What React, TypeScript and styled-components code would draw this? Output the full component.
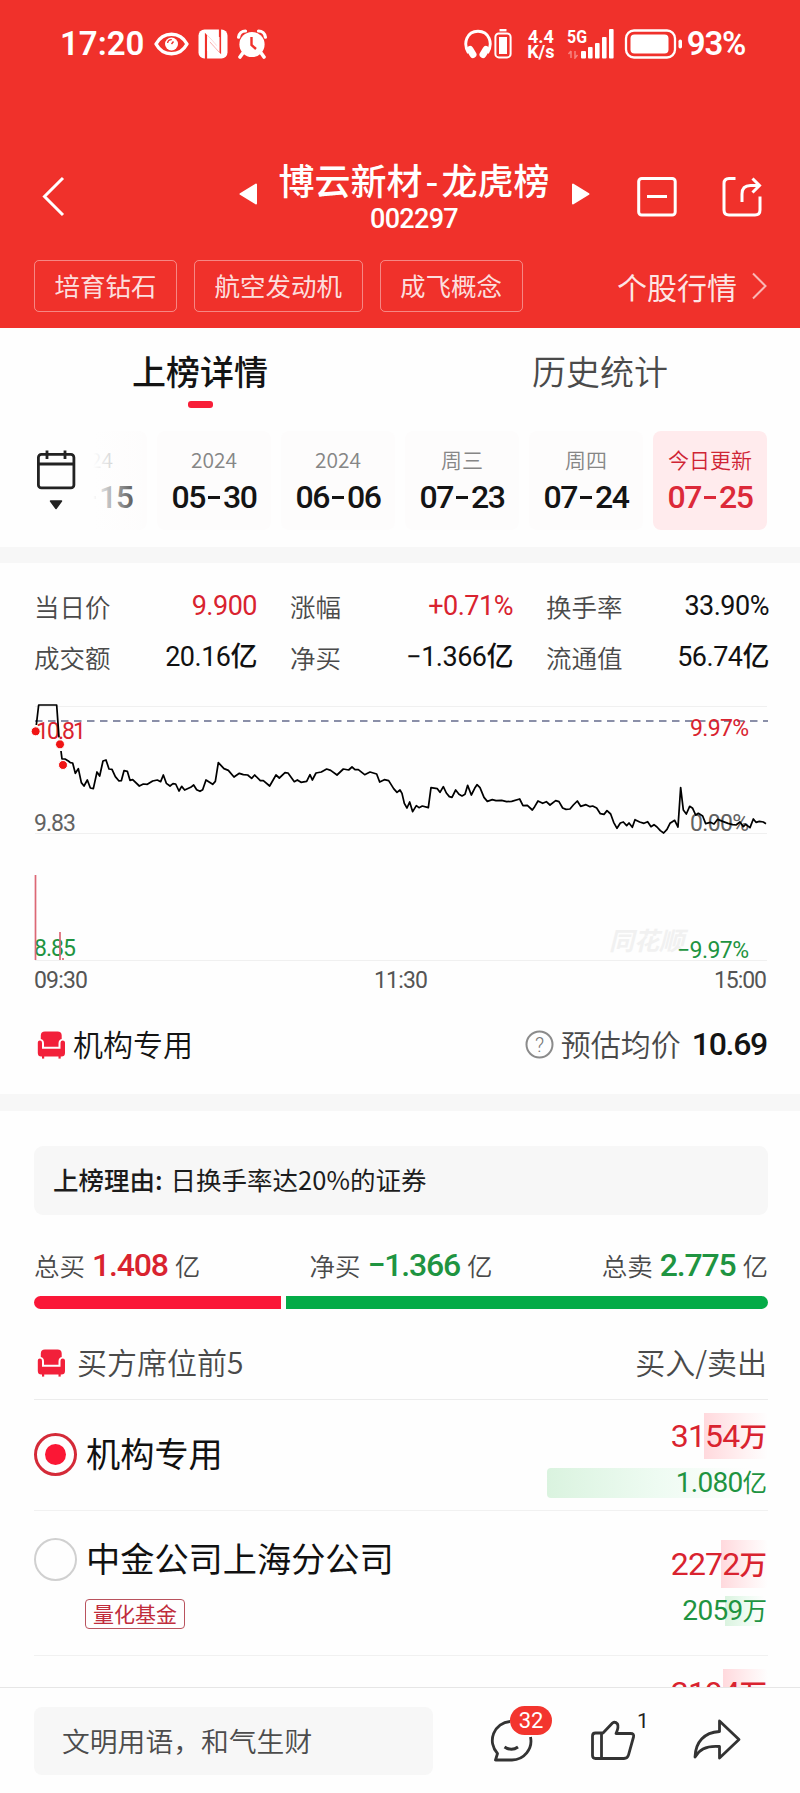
import React from "react";
import styled, { createGlobalStyle } from "styled-components";

const CJK = `"Noto Sans CJK SC", sans-serif`;
const NUM = `Roboto, "Noto Sans CJK SC", sans-serif`;
const RED = "#d9232f";
const GREEN = "#1f9441";

const GlobalStyle = createGlobalStyle`
  * { box-sizing: border-box; }
  html, body { margin: 0; padding: 0; background: #fff; }
  body { font-family: ${CJK}; color: #1a1a1a; }
`;

const Screen = styled.div`
  width: 800px;
  height: 1793px;
  display: flex;
  flex-direction: column;
  overflow: hidden;
  background: #fefefe;
`;

/* ---------- header ---------- */
const Header = styled.header`
  height: 328px;
  flex: none;
  background: #f0312b;
  color: #fff;
`;

const StatusBar = styled.div`
  height: 88px;
  padding: 0 55px 0 60px;
  display: flex;
  align-items: center;
  justify-content: space-between;
`;

const StatusGroup = styled.div`
  display: flex;
  align-items: center;
  height: 30px;
`;

const StatusText = styled.span<{ $ls?: number }>`
  font: 600 33px/30px ${NUM};
  letter-spacing: ${(p) => p.$ls ?? 0}px;
  white-space: nowrap;
`;

const Speed = styled.div`
  width: 32px;
  margin: 0 10px 0 13px;
  font: 700 18px/15px ${NUM};
  text-align: center;
  white-space: nowrap;
`;

const NavBar = styled.div`
  height: 172px;
  padding: 47px 38px 0 42px;
  display: flex;
  align-items: flex-start;
  justify-content: space-between;
`;

const NavIcons = styled.div<{ $w: number }>`
  width: ${(p) => p.$w}px;
  padding-top: 40px;
  display: flex;
  justify-content: space-between;
`;

const TitleGroup = styled.div`
  display: flex;
  justify-content: center;
  gap: 20px;
  flex: 1;
  margin-left: 24px;
`;

const TitleText = styled.div`
  text-align: center;
  width: 275px;
`;

const Title = styled.h1`
  margin: 22px 0 0;
  font: 500 36px/44px ${CJK};
  white-space: nowrap;
  display: flex;
  justify-content: center;
`;

const TitleDash = styled.span`
  width: 19px;
  text-align: center;
`;

const Code = styled.div`
  font: 500 27px/36px ${NUM};
  letter-spacing: -0.7px;
`;

const Triangle = styled.svg`
  margin-top: 48px;
  width: 18px;
  height: 22px;
  flex: none;
`;

const TagRow = styled.div`
  display: flex;
  align-items: center;
  padding: 0 33px 0 34px;
  gap: 17px;
`;

const Tag = styled.span`
  height: 52px;
  padding: 0 19.5px;
  border: 1px solid rgba(255, 255, 255, 0.42);
  border-radius: 5px;
  font: 400 25.5px/47px ${CJK};
  color: rgba(255, 255, 255, 0.86);
  white-space: nowrap;
`;

const QuoteLink = styled.span`
  margin-left: auto;
  display: flex;
  align-items: center;
  gap: 15px;
  font: 400 30px/50px ${CJK};
  color: rgba(255, 255, 255, 0.88);
`;

/* ---------- tabs and dates ---------- */
const Tabs = styled.nav`
  display: grid;
  grid-template-columns: 1fr 1fr;
  height: 103px;
  flex: none;
`;

const Tab = styled.div<{ $active?: boolean }>`
  display: flex;
  flex-direction: column;
  align-items: center;
  padding-top: 18px;
  font: ${(p) => (p.$active ? 500 : 350)} 34px/50px ${CJK};
  color: ${(p) => (p.$active ? "#141414" : "#4a4a4a")};
`;

const TabMark = styled.i`
  width: 25px;
  height: 7px;
  margin-top: 5px;
  border-radius: 3px;
  background: #f81e38;
`;

const DateBar = styled.div`
  height: 116px;
  flex: none;
  display: flex;
  padding: 0 33px 0 37px;
`;

const CalendarButton = styled.div`
  width: 55px;
  flex: none;
  padding-top: 18px;
`;

const DateStrip = styled.div`
  position: relative;
  flex: 1;
  min-width: 0;
  height: 99px;
  overflow: hidden;
  display: flex;
  justify-content: flex-end;
  gap: 10px;
`;

const StripFade = styled.div`
  position: absolute;
  inset: 0 auto 0 0;
  width: 60px;
  background: linear-gradient(90deg, #fefefe 2%, rgba(254, 254, 254, 0) 100%);
`;

const DateCard = styled.div<{ $active?: boolean }>`
  width: 114px;
  flex: none;
  padding-top: 13px;
  border-radius: 8px;
  text-align: center;
  background: ${(p) => (p.$active ? "#ffebed" : "#fdfcfc")};
  color: ${(p) => (p.$active ? "#cf2434" : "#868686")};
  font: 350 21px/30px ${CJK};
  white-space: nowrap;
`;

const DateValue = styled.div<{ $color: string }>`
  display: flex;
  align-items: center;
  justify-content: center;
  gap: 3px;
  padding-top: 3px;
  font: 500 32px/40px ${NUM};
  letter-spacing: -1.4px;
  color: ${(p) => p.$color};
`;

const DateDash = styled.i`
  width: 12px;
  height: 3px;
  background: currentColor;
`;

const Band = styled.div<{ $h: number }>`
  height: ${(p) => p.$h}px;
  flex: none;
  background: #f7f7f7;
`;

/* ---------- quote ---------- */
const Stats = styled.div`
  display: grid;
  grid-template-columns: 223px 223px 223px;
  column-gap: 33px;
  grid-auto-rows: 51px;
  padding: 17px 31px 0 34px;
  height: 127px;
  flex: none;
`;

const Stat = styled.div`
  display: flex;
  align-items: center;
  justify-content: space-between;
  font: 350 25.5px/50px ${CJK};
  color: #4a4a4a;
  white-space: nowrap;
`;

const StatValue = styled.span<{ $color?: string }>`
  font: 450 27px/50px ${NUM};
  letter-spacing: -0.5px;
  color: ${(p) => p.$color ?? "#111"};
`;

const ChartSvg = styled.svg`
  display: block;
  width: 800px;
  height: 310px;
  flex: none;
  font-family: ${NUM};
`;

const SeatSummary = styled.div`
  height: 94px;
  flex: none;
  display: flex;
  align-items: flex-start;
  padding: 18px 33px 0 37px;
  font: 350 30px/50px ${CJK};
  color: #4a4a4a;
  white-space: nowrap;
`;

const SeatName = styled.span<{ $gap: number; $dark?: boolean }>`
  margin-left: ${(p) => p.$gap}px;
  margin-right: auto;
  color: ${(p) => (p.$dark ? "#141414" : "#4a4a4a")};
`;

const IconSlot = styled.span<{ $top: number }>`
  display: flex;
  padding-top: ${(p) => p.$top}px;
`;

const AvgLabel = styled.span`
  margin: 0 11px 0 7px;
`;

const AvgPrice = styled.span`
  font: 500 32px/52px ${NUM};
  letter-spacing: -1.3px;
  color: #141414;
`;

/* ---------- list reason and totals ---------- */
const Reason = styled.div`
  height: 69px;
  margin: 35px 32px 0 34px;
  padding: 0 19px;
  flex: none;
  border-radius: 9px;
  background: #f7f7f7;
  font: 400 25.5px/66px ${CJK};
  color: #1c1c1c;
  white-space: nowrap;
`;

const ReasonLabel = styled.b`
  font-weight: 500;
  margin-right: 8px;
`;

const Totals = styled.div`
  height: 81px;
  flex: none;
  padding: 25px 32px 0 34px;
  display: flex;
  justify-content: space-between;
`;

const Total = styled.div<{ $color: string }>`
  display: flex;
  align-items: center;
  gap: 7px;
  height: 50px;
  font: 350 25.5px/50px ${CJK};
  color: #4a4a4a;
  white-space: nowrap;
  b {
    font: 500 32px/50px ${NUM};
    letter-spacing: -1.2px;
    color: ${(p) => p.$color};
  }
`;

const SplitBar = styled.div`
  display: grid;
  grid-template-columns: 247px 1fr;
  gap: 5px;
  height: 13px;
  flex: none;
  margin: 0 32px 0 34px;
  border-radius: 7px;
  overflow: hidden;
`;

const SplitPart = styled.i<{ $color: string }>`
  background: ${(p) => p.$color};
`;

const ListHead = styled.div`
  height: 91px;
  flex: none;
  margin: 0 32px 0 34px;
  padding: 27px 1px 0 3px;
  display: flex;
  border-bottom: 1px solid #ececec;
  font: 350 30px/50px ${CJK};
  color: #4a4a4a;
`;

/* ---------- seats ---------- */
const SeatList = styled.div`
  height: 287px;
  flex: none;
  overflow: hidden;
`;

const SeatRow = styled.div<{ $h: number; $top: number }>`
  height: ${(p) => p.$h}px;
  margin: 0 32px 0 34px;
  padding-top: ${(p) => p.$top}px;
  display: flex;
  border-bottom: 1px solid #f1f1f1;
`;

const Radio = styled.span<{ $on?: boolean }>`
  width: 43px;
  height: 43px;
  flex: none;
  border-radius: 50%;
  border: ${(p) => (p.$on ? "3px solid #d42a38" : "2px solid #d0d0d0")};
  display: flex;
  align-items: center;
  justify-content: center;
  &::after {
    content: "";
    width: 21px;
    height: 21px;
    border-radius: 50%;
    background: ${(p) => (p.$on ? "#fb1735" : "transparent")};
  }
`;

const SeatInfo = styled.div`
  margin-left: 9px;
  font: 400 34.2px/38px ${CJK};
  color: #111;
  white-space: nowrap;
`;

const FundTag = styled.div`
  width: 100px;
  height: 30px;
  margin: 23px 0 0 -1px;
  border: 1px solid #b9535e;
  border-radius: 4px;
  font: 400 21px/27px ${CJK};
  text-align: center;
  color: #c02c3b;
`;

const Amounts = styled.div<{ $shift: number }>`
  margin-left: auto;
  margin-top: ${(p) => p.$shift}px;
  display: flex;
  flex-direction: column;
  align-items: flex-end;
`;

const Amount = styled.div<{ $buy?: boolean; $h: number; $fill: number; $gap?: number }>`
  width: 221px;
  height: ${(p) => p.$h}px;
  margin-top: ${(p) => p.$gap ?? 0}px;
  padding-right: 1px;
  text-align: right;
  white-space: nowrap;
  font: ${(p) => (p.$buy ? 450 : 400)} ${(p) => (p.$buy ? 32 : 28)}px/${(p) => p.$h}px ${NUM};
  letter-spacing: ${(p) => (p.$buy ? -0.8 : -0.7)}px;
  color: ${(p) => (p.$buy ? RED : GREEN)};
  border-radius: 4px;
  background: linear-gradient(90deg, ${(p) => (p.$buy ? "#ffd9dd, #fff2f3 65%, #fefefe" : "#daf3df, #eefbf2 50%, #fefefe 92%")})
    right / ${(p) => p.$fill}px 100% no-repeat;
  span { font-size: ${(p) => (p.$buy ? 27.5 : 24.5)}px; letter-spacing: 0; }
`;

/* ---------- footer ---------- */
const Footer = styled.footer`
  flex: 1;
  display: flex;
  align-items: flex-start;
  padding: 19px 0 0 34px;
  border-top: 1px solid #e6e6e6;
`;

const CommentInput = styled.div`
  width: 399px;
  height: 68px;
  padding-left: 28px;
  border-radius: 8px;
  background: #f7f7f7;
  font: 350 27.8px/66px ${CJK};
  color: #4c4c4c;
  white-space: nowrap;
`;

const FooterAction = styled.div<{ $ml: number }>`
  position: relative;
  display: flex;
  margin: 12px 0 0 ${(p) => p.$ml}px;
`;

const Badge = styled.span`
  position: absolute;
  left: 20px;
  top: -13px;
  width: 42px;
  height: 29px;
  border-radius: 15px;
  background: #f3352e;
  color: #fff;
  text-align: center;
  font: 400 22px/29px ${NUM};
`;

const LikeCount = styled.span`
  position: absolute;
  left: 46px;
  top: -11px;
  font: 400 21px/26px ${NUM};
  color: #222;
`;

const EyeIcon = () => (
  <svg width="35" height="24" viewBox="0 0 35 24" fill="none" stroke="#fff" style={{ marginLeft: 10 }}>
    <path d="M2 12C9-1 26-1 33 12C26 25 9 25 2 12Z" strokeWidth="3.4" strokeLinejoin="round" />
    <circle cx="17.5" cy="12" r="6.5" fill="#fff" stroke="none" />
    <path d="M13.6 11a4 4 0 0 1 4.2-3.4M17.5 12l2-2.5" stroke="#f0312b" strokeWidth="1.4" />
  </svg>
);

const NfcIcon = () => (
  <svg width="30" height="30" viewBox="0 0 30 30" style={{ marginLeft: 9 }}>
    <rect x=".5" y=".5" width="29" height="29" rx="6" fill="#fff" />
    <path d="M8 30V6.5L21.5 21V9M22 0V22.5L8.5 8" fill="none" stroke="#f0312b" strokeWidth="2.2" />
    <path d="M10.4 22V9.4L20.2 20V8" fill="none" stroke="#fff" strokeWidth="2.6" />
  </svg>
);

const AlarmIcon = () => (
  <svg width="30" height="30" viewBox="0 0 30 30" fill="none" stroke="#fff" style={{ marginLeft: 9 }}>
    <circle cx="15" cy="15.5" r="12.6" fill="#fff" stroke="none" />
    <path d="M1.6 8.2A7 7 0 0 1 8.5 2M28.4 8.2A7 7 0 0 0 21.5 2" strokeWidth="3.2" strokeLinecap="round" />
    <path d="M5.5 24.5L3 28M24.5 24.5L27 28" strokeWidth="3.6" strokeLinecap="round" />
    <path d="M14.5 8V16L19 20" stroke="#f0312b" strokeWidth="2.4" />
  </svg>
);

const HeadphoneIcon = () => (
  <svg width="28" height="30" viewBox="0 0 28 30" fill="none" stroke="#fff">
    <path d="M4.5 24C-1.5 14 3 2.2 14 2.2S29.500 14 23.5 24" strokeWidth="2.9" />
    <path d="M6 20.500L9 25.500M22 20.500L19 25.500" strokeWidth="7" strokeLinecap="round" />
  </svg>
);

const SmallBattery = () => (
  <svg width="18" height="30" viewBox="0 0 18 30" style={{ marginLeft: 2 }}>
    <path d="M5.500 1.200h7" stroke="#fff" strokeWidth="2.400" />
    <rect x="1.400" y="4.400" width="15.200" height="24" rx="3.500" fill="none" stroke="#fff" strokeWidth="2" />
    <rect x="5" y="8" width="8" height="17" fill="#fff" />
  </svg>
);

const SignalIcon = () => (
  <svg width="48" height="30" viewBox="0 0 48 30" fill="#fff">
    <text x="0" y="14" fontFamily="Roboto" fontWeight="700" fontSize="17.500" textLength="20" lengthAdjust="spacingAndGlyphs">5G</text>
    <path d="M4 22v7M1.500 25l2.500-3M8 22v7l2.500-3" stroke="#fff" strokeWidth="1.500" opacity=".4" fill="none" />
    <rect x="14" y="22" width="5" height="7.500" rx="1" />
    <rect x="21" y="18" width="4.600" height="11.500" rx="1" />
    <rect x="28" y="14" width="4.600" height="15.500" rx="1" />
    <rect x="35" y="8" width="4.600" height="21.500" rx="1" />
    <rect x="42" y="0" width="4.600" height="29.500" rx="1" />
  </svg>
);

const BatteryIcon = () => (
  <svg width="60" height="30" viewBox="0 0 60 30" style={{ margin: "0 3px 0 9px" }}>
    <rect x="2" y="1.500" width="49" height="27" rx="8" fill="none" stroke="#fff" strokeWidth="2.300" />
    <rect x="6.500" y="5.500" width="38" height="19" rx="4" fill="#fff" />
    <rect x="54.500" y="10.500" width="3.500" height="9" rx="1.700" fill="#fff" />
  </svg>
);

const SofaIcon = () => (
  <svg width="29" height="28" viewBox="0 0 29 28" fill="#f2203a">
    <path d="M3.800 8V4.500Q3.800 .5 8 .5h12.500q4.200 0 4.200 4V8q-3.200.8-3.200 4.500v3.200H7v-3.200Q7 8.800 3.800 8Z" />
    <path d="M.8 11.500Q.8 9.500 2.900 9.500T5 11.800V17.800H23.500V11.800q0-2.300 2.200-2.300T28 11.500V22q0 3.600-3.600 3.600H4.400Q.8 25.600.8 22Z" />
    <rect x="5" y="25" width="2.200" height="2.600" />
    <rect x="21.500" y="25" width="2.200" height="2.600" />
  </svg>
);

const chartLine =
  "183,543 186,567 195,567 205,573 211,578 218,579 226,610 235,596 244,638 252,648 262,630 271,654 280,656 291,606 299,618 309,573 318,570 327,597 336,598 346,620 357,633 364,632 372,602 382,604 390,631 398,629 418,648 430,642 442,643 458,633 472,630 482,635 490,615 499,640 510,648 519,641 527,642 537,663 545,649 554,660 572,652 581,645 590,659 600,664 608,659 618,630 638,643 646,634 655,578 672,596 685,601 702,621 718,610 730,614 743,615 755,625 764,615 781,632 790,632 809,648 828,615 838,624 855,608 864,609 883,635 892,630 903,637 920,634 930,614 937,630 948,609 964,606 980,597 992,601 1011,615 1030,597 1046,600 1056,591 1065,599 1075,599 1094,614 1110,606 1130,612 1139,636 1153,629 1166,632 1181,656 1191,667 1200,660 1206,670 1213,700 1221,714 1229,696 1238,725 1249,707 1257,713 1267,708 1285,713 1293,653 1312,656 1320,667 1330,650 1339,669 1348,680 1356,682 1367,660 1377,673 1386,678 1395,673 1403,646 1414,675 1424,655 1431,644 1440,653 1452,682 1462,694 1477,689 1488,692 1505,691 1520,695 1535,694 1559,687 1569,707 1582,706 1597,720 1604,710 1614,693 1628,700 1639,695 1650,705 1667,692 1677,695 1688,714 1698,718 1710,717 1720,705 1732,693 1742,709 1758,704 1770,710 1778,708 1790,714 1801,731 1812,733 1821,722 1832,732 1841,757 1851,775 1861,759 1870,756 1880,767 1887,759 1897,772 1905,749 1919,756 1932,760 1943,755 1953,770 1962,764 1971,771 1981,782 1991,789 2001,778 2010,760 2024,751 2034,771 2042,653 2050,720 2059,732 2069,709 2078,715 2087,735 2095,730 2108,738 2117,761 2131,757 2142,762 2153,748 2170,755 2184,760 2198,764 2208,765 2220,756 2230,770 2237,763 2250,773 2260,747 2268,757 2278,754 2290,756 2298,761";

const Chart = () => (
  <ChartSvg viewBox="0 690 800 310">
    <path d="M35 706.500H767M35 833.500H767M35 960.500H767" stroke="#f0f0f0" strokeWidth="1.200" />
    <path d="M35 721H768" stroke="#8a8fa8" strokeWidth="2" strokeDasharray="7.500 5.500" />
    <text x="609" y="950" fontSize="25" fontStyle="italic" fontWeight="700" fill="#f1f1f1">同花顺</text>
    <g fontSize="23">
      <text x="36" y="738.500" fill={RED} textLength="50">10.81</text>
      <text x="34" y="830.500" fill="#626262" textLength="42">9.83</text>
      <text x="34" y="956" fill={GREEN} textLength="42">8.85</text>
      <text x="690" y="736" fill={RED} textLength="59">9.97%</text>
      <text x="690" y="830.500" fill="#626262" textLength="59">0.00%</text>
      <text x="677" y="958" fill={GREEN} textLength="72">−9.97%</text>
      <text x="34" y="988" fill="#555" textLength="54">09:30</text>
      <text x="374" y="988" fill="#555" textLength="54">11:30</text>
      <text x="714" y="988" fill="#555" textLength="53">15:00</text>
    </g>
    <path d="M35.500 875V960M60 932V960M63 958V960" stroke="#dc6875" strokeWidth="1.700" />
    <g transform="translate(0 570) scale(.33333)">
      <polyline points="109,465 116,405 170,405 177,502" fill="none" stroke="#000" strokeWidth="5.200" strokeLinejoin="round" />
      <polyline points={chartLine} fill="none" stroke="#000" strokeWidth="5.200" strokeLinejoin="round" />
      <g fill="#f01414" stroke="#fff" strokeWidth="3">
        <circle cx="107" cy="484" r="13.500" />
        <circle cx="180" cy="523" r="13.500" />
        <circle cx="189" cy="585" r="13.500" />
      </g>
    </g>
  </ChartSvg>
);

const dates = [
  { label: "2024", m: "05", d: "15" },
  { label: "2024", m: "05", d: "30" },
  { label: "2024", m: "06", d: "06" },
  { label: "周三", m: "07", d: "23" },
  { label: "周四", m: "07", d: "24" },
  { label: "今日更新", m: "07", d: "25", active: true },
];

const stats = [
  { label: "当日价", value: "9.900", color: RED },
  { label: "涨幅", value: "+0.71%", color: RED },
  { label: "换手率", value: "33.90%" },
  { label: "成交额", value: "20.16亿" },
  { label: "净买", value: "−1.366亿" },
  { label: "流通值", value: "56.74亿" },
];

const totals = [
  { label: "总买", value: "1.408", color: RED },
  { label: "净买", value: "−1.366", color: GREEN },
  { label: "总卖", value: "2.775", color: GREEN },
];

export default function App() {
  return (
    <Screen>
      <GlobalStyle />
      <Header>
        <StatusBar>
          <StatusGroup>
            <StatusText>17:20</StatusText>
            <EyeIcon />
            <NfcIcon />
            <AlarmIcon />
          </StatusGroup>
          <StatusGroup>
            <HeadphoneIcon />
            <SmallBattery />
            <Speed>4.4<br />K/s</Speed>
            <SignalIcon />
            <BatteryIcon />
            <StatusText $ls={-1.3}>93%</StatusText>
          </StatusGroup>
        </StatusBar>
        <NavBar>
          <NavIcons $w={125}>
            <svg width="24" height="42" viewBox="0 0 24 42" fill="none" stroke="#fff" strokeWidth="3">
              <path d="M21 3L2.500 21.500L21 40" />
            </svg>
          </NavIcons>
          <TitleGroup>
            <Triangle viewBox="0 0 18 22" fill="#fff" stroke="#fff" strokeWidth="2" strokeLinejoin="round">
              <path d="M1.500 11L17 1.500V20.500Z" />
            </Triangle>
            <TitleText>
              <Title>博云新材<TitleDash>-</TitleDash>龙虎榜</Title>
              <Code>002297</Code>
            </TitleText>
            <Triangle viewBox="0 0 18 22" fill="#fff" stroke="#fff" strokeWidth="2" strokeLinejoin="round">
              <path d="M16.500 11L1 1.500V20.500Z" />
            </Triangle>
          </TitleGroup>
          <NavIcons $w={125}>
            <svg width="40" height="42" viewBox="0 0 40 42" fill="none" stroke="#fff" strokeWidth="3">
              <rect x="1.700" y="3.500" width="36.500" height="36.500" rx="3" />
              <path d="M10 21.500H30" />
            </svg>
            <svg width="40" height="42" viewBox="0 0 40 42" fill="none" stroke="#fff" strokeWidth="3">
              <path d="M13.500 3.500H7Q2 3.500 2 8.500V35Q2 40 7 40H33Q38 40 38 35V21.500" />
              <path d="M20 27V19Q20 10.500 28.500 10.500H37M30.500 3.500L37.500 10.500L30.500 17.500" />
            </svg>
          </NavIcons>
        </NavBar>
        <TagRow>
          <Tag>培育钻石</Tag>
          <Tag>航空发动机</Tag>
          <Tag>成飞概念</Tag>
          <QuoteLink>
            个股行情
            <svg width="15" height="28" viewBox="0 0 15 28" fill="none" stroke="#fff" strokeOpacity=".65" strokeWidth="2">
              <path d="M1 1.500L13.500 14L1 26.500" />
            </svg>
          </QuoteLink>
        </TagRow>
      </Header>

      <Tabs>
        <Tab $active>上榜详情<TabMark /></Tab>
        <Tab>历史统计</Tab>
      </Tabs>

      <DateBar>
        <CalendarButton>
          <svg width="40" height="62" viewBox="0 0 40 62" fill="none" stroke="#222" strokeWidth="2.800">
            <rect x="1.400" y="5.400" width="35.500" height="33.500" rx="3" />
            <path d="M1.400 15H37M10 1.500V10M28 1.500V10" />
            <path d="M13.500 52H24.500L19 59.500Z" fill="#222" strokeWidth="1.500" strokeLinejoin="round" />
          </svg>
        </CalendarButton>
        <DateStrip>
          {dates.map((d) => (
            <DateCard key={d.m + d.d} $active={d.active}>
              {d.label}
              <DateValue $color={d.active ? "#dc2939" : "#141414"}>
                {d.m}
                <DateDash />
                {d.d}
              </DateValue>
            </DateCard>
          ))}
          <StripFade />
        </DateStrip>
      </DateBar>

      <Band $h={16} />

      <Stats>
        {stats.map((s) => (
          <Stat key={s.label}>
            {s.label}
            <StatValue $color={s.color}>{s.value}</StatValue>
          </Stat>
        ))}
      </Stats>

      <Chart />

      <SeatSummary>
        <IconSlot $top={13}><SofaIcon /></IconSlot>
        <SeatName $gap={7} $dark>机构专用</SeatName>
        <IconSlot $top={12}>
          <svg width="29" height="29" viewBox="0 0 29 29">
            <circle cx="14.500" cy="14.500" r="13" fill="none" stroke="#8b8b8b" strokeWidth="2" />
            <text x="14.500" y="21.500" textAnchor="middle" fontFamily="Roboto" fontSize="20" fill="#777">?</text>
          </svg>
        </IconSlot>
        <AvgLabel>预估均价</AvgLabel>
        <AvgPrice>10.69</AvgPrice>
      </SeatSummary>

      <Band $h={17} />

      <Reason>
        <ReasonLabel>上榜理由:</ReasonLabel>日换手率达20%的证券
      </Reason>

      <Totals>
        {totals.map((t) => (
          <Total key={t.label} $color={t.color}>
            {t.label}<b>{t.value}</b>亿
          </Total>
        ))}
      </Totals>

      <SplitBar>
        <SplitPart $color="#fa1738" />
        <SplitPart $color="#04ab47" />
      </SplitBar>

      <ListHead>
        <IconSlot $top={13}><SofaIcon /></IconSlot>
        <SeatName $gap={11}>买方席位前5</SeatName>
        买入/卖出
      </ListHead>

      <SeatList>
        <SeatRow $h={111} $top={33}>
          <Radio $on />
          <SeatInfo>机构专用</SeatInfo>
          <Amounts $shift={-20}>
            <Amount $buy $h={46} $fill={64}>3154<span>万</span></Amount>
            <Amount $h={30} $gap={9} $fill={221}>1.080<span>亿</span></Amount>
          </Amounts>
        </SeatRow>
        <SeatRow $h={145} $top={27}>
          <Radio />
          <SeatInfo>
            中金公司上海分公司
            <FundTag>量化基金</FundTag>
          </SeatInfo>
          <Amounts $shift={2}>
            <Amount $buy $h={48} $fill={47}>2272<span>万</span></Amount>
            <Amount $h={30} $gap={8} $fill={43}>2059<span>万</span></Amount>
          </Amounts>
        </SeatRow>
        <SeatRow $h={145} $top={13}>
          <Amounts $shift={0}>
            <Amount $buy $h={48} $fill={45}>2194<span>万</span></Amount>
          </Amounts>
        </SeatRow>
      </SeatList>

      <Footer>
        <CommentInput>文明用语，和气生财</CommentInput>
        <FooterAction $ml={57}>
          <svg width="44" height="44" viewBox="0 0 44 44" fill="none" stroke="#333" strokeWidth="2.800" strokeLinejoin="round">
            <path d="M20 2.500A19 19 0 0 0 7.500 34.500L5.500 41H22A19 19 0 0 0 40.500 18" />
            <path d="M14.500 28Q21.500 32.500 28 28" strokeWidth="3" />
          </svg>
          <Badge>32</Badge>
        </FooterAction>
        <FooterAction $ml={57}>
          <svg width="46" height="44" viewBox="0 0 46 44" fill="none" stroke="#333" strokeWidth="2.800" strokeLinejoin="round">
            <path d="M4.500 14H12L21.500 4Q24 2 26.500 5Q28 8 25 14.500H39.500Q43.500 14.500 42.500 18L37.500 36Q36.500 39.500 33 39.500H4.500Q1.500 39.500 1.500 36.500V17Q1.500 14 4.500 14ZM10.500 14V39.500" />
          </svg>
          <LikeCount>1</LikeCount>
        </FooterAction>
        <FooterAction $ml={56}>
          <svg width="50" height="44" viewBox="0 0 50 44" fill="none" stroke="#333" strokeWidth="2.800" strokeLinejoin="round">
            <path d="M26.500 2L46 20.500L26.500 39V27.500C14 26.500 6 30.500 2 38C2.500 23 11 13.500 26.500 12.500Z" />
          </svg>
        </FooterAction>
      </Footer>
    </Screen>
  );
}
